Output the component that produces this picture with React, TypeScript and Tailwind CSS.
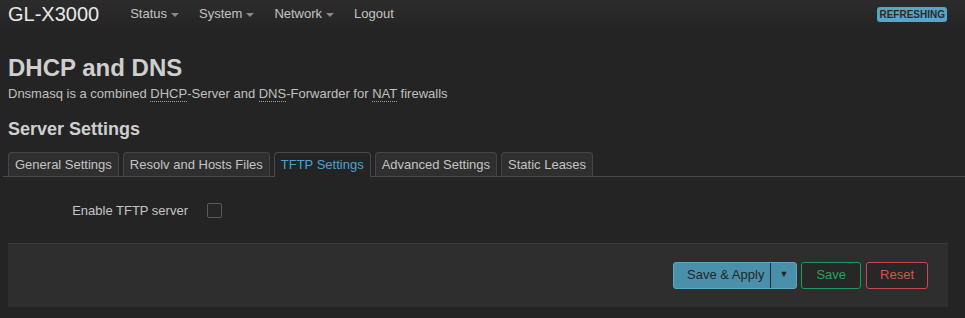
import React from "react";

function Caret() {
  return (
    <span className="ml-[4px] inline-block h-0 w-0 border-x-[4px] border-t-[4px] border-x-transparent border-t-[#8a8a8a] align-middle" />
  );
}

function Abbr({ children }: { children: React.ReactNode }) {
  return (
    <span className="border-b border-dotted border-[#a0a0a0] leading-[13px]">{children}</span>
  );
}

export default function App() {
  const tabs = [
    "General Settings",
    "Resolv and Hosts Files",
    "TFTP Settings",
    "Advanced Settings",
    "Static Leases",
  ];
  return (
    <div className="min-h-[318px] bg-[#242424] font-['Liberation_Sans',Arial,sans-serif] text-[#c8c8c8]">
      <header className="flex h-[28px] items-center bg-gradient-to-b from-[#2c2c2c] to-[#252525] pl-2 pr-[18px]">
        <span className="text-[20px] leading-none text-[#e8e8e8]">GL-X3000</span>
        <nav className="ml-[21px] flex items-center text-[13px] text-[#c4c4c4]">
          <span className="px-[10px]">Status<Caret /></span>
          <span className="px-[10px]">System<Caret /></span>
          <span className="px-[10px]">Network<Caret /></span>
          <span className="px-[10px]">Logout</span>
        </nav>
        <span className="ml-auto rounded-[3px] bg-[#57a6c9] px-[2px] py-[2px] text-[10px] font-bold leading-[11px] text-[#2a2a2a]">
          REFRESHING
        </span>
      </header>

      <main className="pl-2 pr-[17px]">
        <h2 className="mt-[26px] text-[24px] font-bold leading-[28px] text-[#cfcfcf]">DHCP and DNS</h2>
        <p className="mt-[3px] text-[13px] leading-[18px] text-[#c0c0c0]">
          Dnsmasq is a combined <Abbr>DHCP</Abbr>-Server and <Abbr>DNS</Abbr>-Forwarder for <Abbr>NAT</Abbr> firewalls
        </p>
        <h3 className="mt-[15px] text-[18px] font-bold leading-[22px] text-[#cfcfcf]">Server Settings</h3>

        <div className="-ml-[5px] -mr-[17px] mt-[12px] flex items-end gap-[4px] border-b border-[#4a4a4a] pl-[5px]">
          {tabs.map((t) => {
            const active = t === "TFTP Settings";
            return (
              <div
                key={t}
                className={
                  active
                    ? "-mb-px rounded-t-[4px] border border-b-0 border-[#4a4a4a] bg-[#242424] px-[6px] pb-[4px] pt-[4px] text-[13px] leading-[16px] text-[#4ba3d3]"
                    : "rounded-t-[4px] border border-b-0 border-[#454545] bg-[#2f2f2f] px-[6px] pb-[3px] pt-[4px] text-[13px] leading-[16px] text-[#c4c4c4]"
                }
              >
                {t}
              </div>
            );
          })}
        </div>

        <div className="mt-[24px] flex items-center">
          <label className="w-[180px] text-right text-[13px] text-[#c4c4c4]">Enable TFTP server</label>
          <span className="ml-[19px] inline-block h-[15px] w-[15px] rounded-[2px] border border-[#5a5a5a] bg-[#262626]" />
        </div>

        <div className="mt-[22px] flex h-[64px] items-center justify-end border-t border-[#3c3c3c] bg-[#2e2e2e] pr-[20px]">
          <div className="flex h-[27px] items-stretch overflow-hidden rounded-[3px] border border-[#5aa8c8] bg-[#4a90ab] text-[13px] text-[#262626]">
            <span className="flex items-center pl-[13px] pr-[6px]">Save &amp; Apply</span>
            <span className="w-px bg-[#1e2a30]" />
            <span className="flex w-[25px] items-center justify-center text-[9px]">▼</span>
          </div>
          <button className="ml-[4px] h-[27px] rounded-[3px] border border-[#1e9a5a] bg-[#272727] px-[14px] text-[13px] text-[#22a35e]">
            Save
          </button>
          <button className="ml-[5px] h-[27px] rounded-[3px] border border-[#c94a4a] bg-[#272727] px-[13px] text-[13px] text-[#d9534f]">
            Reset
          </button>
        </div>
      </main>
    </div>
  );
}
